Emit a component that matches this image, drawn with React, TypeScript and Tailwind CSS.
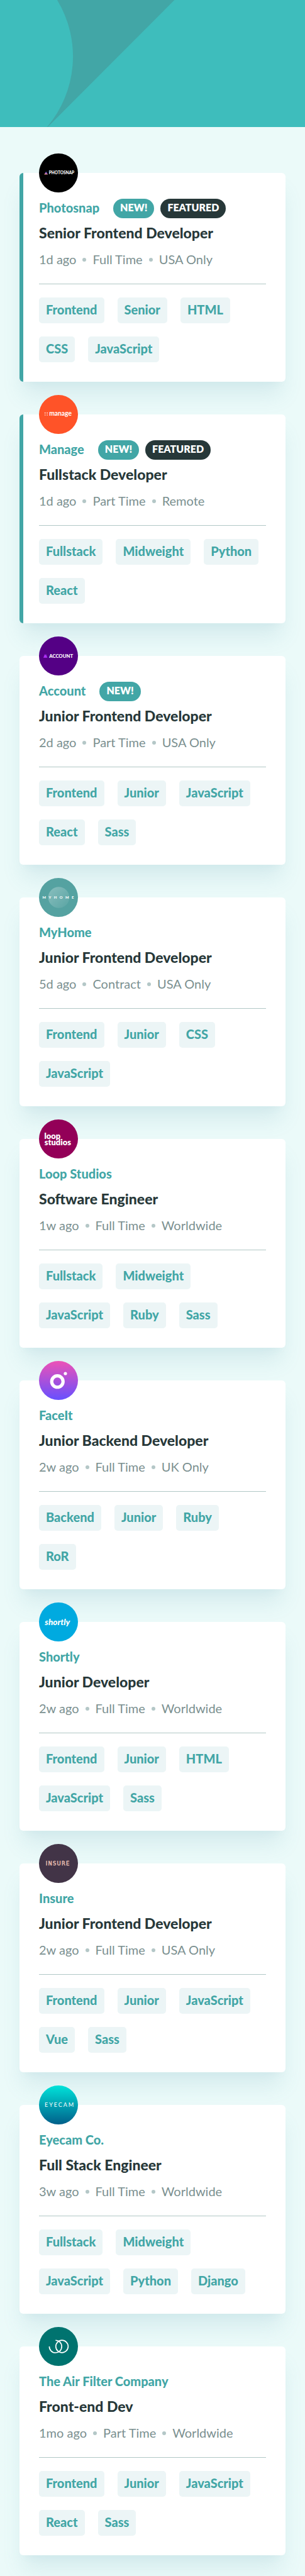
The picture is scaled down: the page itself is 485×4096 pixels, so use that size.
import type { ReactNode } from "react";

type Job = {
  company: string;
  logo: ReactNode;
  isNew?: boolean;
  featured?: boolean;
  position: string;
  meta: string[];
  tags: string[];
};

function Logo({ fill, children }: { fill: string; children: ReactNode }) {
  return (
    <svg viewBox="0 0 96 96" className="block size-full" aria-hidden="true">
      <circle cx="48" cy="48" r="48" fill={fill} />
      {children}
    </svg>
  );
}

const jobs: Job[] = [
  {
    company: "Photosnap",
    logo: (
      <Logo fill="#000000">
        <defs>
          <linearGradient id="snap" x1="0.6" y1="0" x2="0.3" y2="1">
            <stop offset="0.2" stopColor="#5a5fe0" />
            <stop offset="0.7" stopColor="#c66fb0" />
            <stop offset="1" stopColor="#ffb48a" />
          </linearGradient>
        </defs>
        <path d="M17.3 44.6 L22 51.8 H12.8 Z" fill="url(#snap)" />
        <text x="24.5" y="51.4" className="font-['Lato'] text-[10px] font-black" fill="#fff">PHOTOSNAP</text>
      </Logo>
    ),
    isNew: true,
    featured: true,
    position: "Senior Frontend Developer",
    meta: ["1d ago", "Full Time", "USA Only"],
    tags: ["Frontend", "Senior", "HTML", "CSS", "JavaScript"],
  },
  {
    company: "Manage",
    logo: (
      <Logo fill="#ff5328">
        <g fill="#fff">
          <circle cx="15" cy="44.2" r="1.3" />
          <circle cx="20.4" cy="44.2" r="1.3" />
          <circle cx="15" cy="49.4" r="1.3" opacity="0.7" />
          <circle cx="20.4" cy="49.4" r="1.3" opacity="0.7" />
        </g>
        <text x="25" y="50.6" className="font-['Lato'] text-[16px] font-bold" fill="#fff">manage</text>
      </Logo>
    ),
    isNew: true,
    featured: true,
    position: "Fullstack Developer",
    meta: ["1d ago", "Part Time", "Remote"],
    tags: ["Fullstack", "Midweight", "Python", "React"],
  },
  {
    company: "Account",
    logo: (
      <Logo fill="#540085">
        <path d="M17.5 43 L21 52.4 H12 Z" fill="#6f2bc0" />
        <path d="M14.6 43.4 L16.4 47 L17.4 45 L20 52.4 H10.8 Z" fill="#b02cf5" />
        <text x="25" y="52.3" className="font-['Lato'] text-[12px] font-black" fill="#fff">ACCOUNT</text>
      </Logo>
    ),
    isNew: true,
    position: "Junior Frontend Developer",
    meta: ["2d ago", "Part Time", "USA Only"],
    tags: ["Frontend", "Junior", "JavaScript", "React", "Sass"],
  },
  {
    company: "MyHome",
    logo: (
      <Logo fill="#55a2a1">
        <defs>
          <linearGradient id="home" x1="0.1" y1="0.1" x2="0.9" y2="0.9">
            <stop offset="0" stopColor="#fff" stopOpacity="0.28" />
            <stop offset="1" stopColor="#fff" stopOpacity="0.06" />
          </linearGradient>
        </defs>
        <circle cx="48.7" cy="48" r="26" fill="url(#home)" />
        <text x="8.5" y="51.2" className="font-['Lato'] text-[9px] font-black tracking-[7px]" fill="#fff">MYHOME</text>
      </Logo>
    ),
    position: "Junior Frontend Developer",
    meta: ["5d ago", "Contract", "USA Only"],
    tags: ["Frontend", "Junior", "CSS", "JavaScript"],
  },
  {
    company: "Loop Studios",
    logo: (
      <Logo fill="#930058">
        <text x="13" y="47.4" className="font-['Lato'] text-[20px] font-extrabold" fill="#fff">loop</text>
        <text x="13.5" y="62.8" className="font-['Lato'] text-[20px] font-extrabold" fill="#fff">studios</text>
      </Logo>
    ),
    position: "Software Engineer",
    meta: ["1w ago", "Full Time", "Worldwide"],
    tags: ["Fullstack", "Midweight", "JavaScript", "Ruby", "Sass"],
  },
  {
    company: "FaceIt",
    logo: (
      <Logo fill="url(#face)">
        <defs>
          <linearGradient id="face" x1="0" y1="0" x2="0" y2="1">
            <stop offset="0" stopColor="#ed51b6" />
            <stop offset="1" stopColor="#6750ff" />
          </linearGradient>
        </defs>
        <circle cx="45.3" cy="50.7" r="14" fill="none" stroke="#fff" strokeWidth="8" />
        <circle cx="65" cy="31" r="4" fill="#fff" />
      </Logo>
    ),
    position: "Junior Backend Developer",
    meta: ["2w ago", "Full Time", "UK Only"],
    tags: ["Backend", "Junior", "Ruby", "RoR"],
  },
  {
    company: "Shortly",
    logo: (
      <Logo fill="#00aae0">
        <text x="14.5" y="55.3" className="font-['Lato'] text-[21px] font-black italic" fill="#fff">shortly</text>
      </Logo>
    ),
    position: "Junior Developer",
    meta: ["2w ago", "Full Time", "Worldwide"],
    tags: ["Frontend", "Junior", "HTML", "JavaScript", "Sass"],
  },
  {
    company: "Insure",
    logo: (
      <Logo fill="#423447">
        <text x="16.5" y="53.2" className="font-['DejaVu_Sans'] text-[13px] tracking-[2px]" fill="#f5cbbd" stroke="#f5cbbd" strokeWidth="0.5">INSURE</text>
      </Logo>
    ),
    position: "Junior Frontend Developer",
    meta: ["2w ago", "Full Time", "USA Only"],
    tags: ["Frontend", "Junior", "JavaScript", "Vue", "Sass"],
  },
  {
    company: "Eyecam Co.",
    logo: (
      <Logo fill="url(#eye)">
        <defs>
          <linearGradient id="eye" x1="0" y1="0" x2="0" y2="1">
            <stop offset="0" stopColor="#00e3da" />
            <stop offset="1" stopColor="#005f8a" />
          </linearGradient>
        </defs>
        <text x="14" y="53" className="font-['Lato'] text-[14px] tracking-[3px]" fill="#fff">EYECAM</text>
      </Logo>
    ),
    position: "Full Stack Engineer",
    meta: ["3w ago", "Full Time", "Worldwide"],
    tags: ["Fullstack", "Midweight", "JavaScript", "Python", "Django"],
  },
  {
    company: "The Air Filter Company",
    logo: (
      <Logo fill="#00736f">
        <g fill="none" stroke="#fff" strokeWidth="2.6">
          <circle cx="56.6" cy="48" r="15.2" />
          <path d="M25.4 48 A15.3 15.3 0 1 0 40.7 32.9" />
        </g>
      </Logo>
    ),
    position: "Front-end Dev",
    meta: ["1mo ago", "Part Time", "Worldwide"],
    tags: ["Frontend", "Junior", "JavaScript", "React", "Sass"],
  },
];

function Pill({ dark, children }: { dark?: boolean; children: ReactNode }) {
  return (
    <span
      className={`flex h-[31px] items-center rounded-full px-[11px] pb-[2px] text-base font-extrabold text-white ${
        dark ? "bg-[#273839]" : "bg-[#42a6a6]"
      }`}
    >
      {children}
    </span>
  );
}

function JobCard({ job }: { job: Job }) {
  return (
    <li
      className={`rounded-md bg-white pr-[31px] pb-[31px] shadow-[0_26px_32px_-6px_rgba(80,150,168,0.14),0_10px_13px_-8px_rgba(80,150,168,0.06)] ${
        job.featured ? "border-l-6 border-[#42a6a6] pl-[25px]" : "pl-[31px]"
      }`}
    >
      <article>
        <div className="-mt-[31px] size-[62px]">{job.logo}</div>
        <div className="mt-2.5 flex h-[31px] items-center">
          <a href="#company" className="pb-[3px] text-xl leading-7 font-black text-[#42a6a6]">
            {job.company}
          </a>
          <div className="ml-[22px] flex gap-2.5">
            {job.isNew && <Pill>NEW!</Pill>}
            {job.featured && <Pill dark>FEATURED</Pill>}
          </div>
        </div>
        <h2 className="mt-[9px] text-[23px] leading-7 font-black text-[#273839]">
          <a href="#position">{job.position}</a>
        </h2>
        <ul className="mt-4 flex h-6 items-center gap-2.5 text-xl leading-6 text-[#7b9090]">
          {job.meta.map((item, i) => (
            <li key={item} className="flex items-center gap-2.5">
              {i > 0 && <span className="mt-[3px] size-[6px] rounded-full bg-[#b4c7c7]" />}
              {item}
            </li>
          ))}
        </ul>
        <hr className="mt-[27px] border-t border-[#b1c8c6]" />
        <div className="mt-[21px] flex flex-wrap gap-[21px]">
          {job.tags.map((tag) => (
            <button
              key={tag}
              type="button"
              className="flex h-[41px] items-center rounded-[5px] bg-[#ecf5f6] px-[11px] pb-[3px] text-xl font-black text-[#42a6a6]"
            >
              {tag}
            </button>
          ))}
        </div>
      </article>
    </li>
  );
}

export default function App() {
  return (
    <div className="bg-[#ebfaf9] font-['Lato',sans-serif]">
      <header className="bg-[#3ebdbc]">
        <svg viewBox="0 0 750 312" className="block w-full" aria-hidden="true">
          <path d="M140.6 0 A268 268 0 0 1 116 312 L117.7 312 L429 0 Z" fill="#42a6a6" />
        </svg>
      </header>
      <main>
        <ul className="flex flex-col gap-[52px] px-[31px] pt-[73px] pb-[33px]">
          {jobs.map((job) => (
            <JobCard key={job.company} job={job} />
          ))}
        </ul>
      </main>
    </div>
  );
}
